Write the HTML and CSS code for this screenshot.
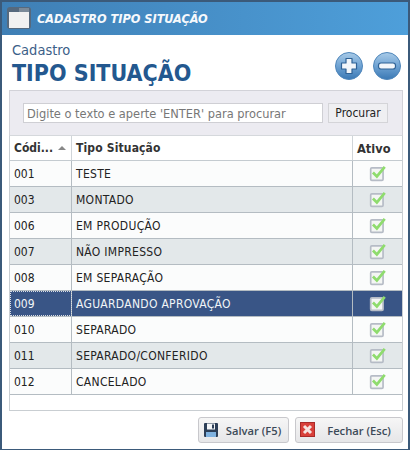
FILE: index.html
```html
<!DOCTYPE html>
<html lang="pt">
<head>
<meta charset="utf-8">
<title>Cadastro Tipo Situação</title>
<link rel="stylesheet" href="styles.css">
</head>
<body>
<div class="window">
  <header class="titlebar">
    <svg class="win-icon" width="24" height="24" viewBox="0 0 24 24">
      <rect x="0" y="0" width="24" height="22" rx="3" fill="#56697d"/>
      <rect x="2" y="5" width="20" height="16" fill="#f1f1f1"/>
      <rect x="12" y="1" width="10" height="4" fill="#7b8a99"/>
    </svg>
    <span class="title-text">CADASTRO TIPO SITUAÇÃO</span>
  </header>
  <main class="content">
    <div class="heading">
      <div>
        <div class="sub">Cadastro</div>
        <h1 class="main-title">TIPO SITUAÇÃO</h1>
      </div>
      <div class="round-btns">
        <svg class="round" width="28" height="28" viewBox="0 0 28 28">
          <defs>
            <linearGradient id="rg" x1="0" y1="0" x2="0" y2="1">
              <stop offset="0" stop-color="#a9cbe8"/>
              <stop offset="0.5" stop-color="#6fa3d3"/>
              <stop offset="1" stop-color="#3a78b4"/>
            </linearGradient>
          </defs>
          <circle cx="14" cy="14" r="13.5" fill="url(#rg)" stroke="#4f86ba"/>
          <path d="M11 6.500h6v4.500h4.500v6H17v4.500h-6V17H6.500v-6H11z" fill="#f2f6fa" stroke="#2f6296" stroke-width="1.200" stroke-linejoin="round"/>
        </svg>
        <svg class="round" width="28" height="28" viewBox="0 0 28 28">
          <circle cx="14" cy="14" r="13.500" fill="url(#rg)" stroke="#4f86ba"/>
          <rect x="5.500" y="11" width="17" height="6" rx="2.500" fill="#f2f6fa" stroke="#2f6296" stroke-width="1.200"/>
        </svg>
      </div>
    </div>

    <form class="search">
      <input class="search-input" type="text" placeholder="Digite o texto e aperte 'ENTER' para procurar">
      <button class="search-btn" type="button">Procurar</button>
    </form>

    <div class="grid">
      <div class="row head">
        <div class="c c1">Códi...<span class="sort"></span></div>
        <div class="c c2">Tipo Situação</div>
        <div class="c c3">Ativo</div>
      </div>
      <div class="row"><div class="c c1">001</div><div class="c c2">TESTE</div><div class="c c3"><svg class="chk" viewBox="0 0 16 16"><use href="#check"/></svg></div></div>
      <div class="row alt"><div class="c c1">003</div><div class="c c2">MONTADO</div><div class="c c3"><svg class="chk" viewBox="0 0 16 16"><use href="#check"/></svg></div></div>
      <div class="row"><div class="c c1">006</div><div class="c c2">EM PRODUÇÃO</div><div class="c c3"><svg class="chk" viewBox="0 0 16 16"><use href="#check"/></svg></div></div>
      <div class="row alt"><div class="c c1">007</div><div class="c c2">NÃO IMPRESSO</div><div class="c c3"><svg class="chk" viewBox="0 0 16 16"><use href="#check"/></svg></div></div>
      <div class="row"><div class="c c1">008</div><div class="c c2">EM SEPARAÇÃO</div><div class="c c3"><svg class="chk" viewBox="0 0 16 16"><use href="#check"/></svg></div></div>
      <div class="row sel"><div class="c c1">009</div><div class="c c2">AGUARDANDO APROVAÇÃO</div><div class="c c3"><svg class="chk" viewBox="0 0 16 16"><use href="#check"/></svg></div></div>
      <div class="row"><div class="c c1">010</div><div class="c c2">SEPARADO</div><div class="c c3"><svg class="chk" viewBox="0 0 16 16"><use href="#check"/></svg></div></div>
      <div class="row alt"><div class="c c1">011</div><div class="c c2">SEPARADO/CONFERIDO</div><div class="c c3"><svg class="chk" viewBox="0 0 16 16"><use href="#check"/></svg></div></div>
      <div class="row"><div class="c c1">012</div><div class="c c2">CANCELADO</div><div class="c c3"><svg class="chk" viewBox="0 0 16 16"><use href="#check"/></svg></div></div>
    </div>

    <footer class="actions">
      <button class="act act-save" type="button">
        <svg width="16" height="16" viewBox="0 0 16 16">
          <rect x="1" y="1" width="14" height="14" rx="1" fill="#2c3e57"/>
          <rect x="4" y="1.500" width="8" height="6" fill="#f4f6f8"/>
          <rect x="9" y="2.500" width="2" height="4" fill="#2c3e57"/>
          <rect x="3" y="10" width="10" height="5" fill="#7fb2e0"/>
        </svg>
        <span class="act-label">Salvar (F5)</span>
      </button>
      <button class="act act-close" type="button">
        <svg width="16" height="16" viewBox="0 0 16 16">
          <rect x="0.500" y="0.500" width="14" height="14" fill="#d9403a" stroke="#a92a28"/>
          <path d="M4 4l7 7M11 4l-7 7" stroke="#f5e3e0" stroke-width="3"/>
        </svg>
        <span class="act-label">Fechar (Esc)</span>
      </button>
    </footer>
  </main>
</div>
<svg class="defs" width="0" height="0">
  <defs>
    <g id="check">
      <rect x="1.500" y="3.500" width="11" height="11" rx="1" fill="#f4f6f4" stroke="#b6bcc6" stroke-width="1.500"/>
      <path d="M3.500 7.500l3.500 3.500L14 2.500" fill="none" stroke="#8fdc6e" stroke-width="2.400"/>
    </g>
  </defs>
</svg>
</body>
</html>
```
FILE: styles.css
```css
* { box-sizing: border-box; }
html, body { margin: 0; padding: 0; }
body {
  width: 410px;
  height: 450px;
  overflow: hidden;
  font-family: "DejaVu Sans", sans-serif;
  font-stretch: condensed;
  font-size: 12px;
  color: #222;
  background: #3b5a7a;
  padding: 2px 2px 1px 2px;
}
.defs { display: block; height: 0; }
.window {
  width: 406px;
  height: 447px;
  display: flex;
  flex-direction: column;
  background: #fff;
}
.titlebar {
  height: 33px;
  flex: none;
  display: flex;
  align-items: center;
  gap: 6px;
  padding-left: 5px;
  background: linear-gradient(to right, #3f7fb5, #4e9fda);
}
.win-icon { flex: none; }
.title-text {
  color: #f6f9fc;
  font-size: 12.6px;
  font-weight: bold;
  font-style: italic;
}
.content {
  flex: 1;
  display: flex;
  flex-direction: column;
  padding: 0 5px 0 7px;
  background: #fff;
}
.heading {
  height: 55px;
  flex: none;
  display: flex;
  justify-content: space-between;
  padding: 6px 0 0 3px;
}
.sub { font-size: 14.5px; line-height: 18px; color: #3c6088; }
.main-title {
  margin: 0;
  font-size: 23px;
  line-height: 28px;
  font-weight: bold;
  color: #23588f;
}
.round-btns {
  display: flex;
  gap: 10px;
  padding: 11px 2px 0 0;
}
.round { display: block; }
.search {
  height: 45px;
  flex: none;
  display: flex;
  align-items: center;
  gap: 5px;
  padding: 0 4px 0 13px;
  background: #ecebf1;
  border: 1px solid #d2d2d8;
  border-bottom: 0;
}
.search-input {
  width: 300px;
  height: 20px;
  padding: 0 3px;
  font: inherit;
  font-size: 12.7px;
  font-stretch: condensed;
  border: 1px solid #cfcfd4;
  background: #fff;
}
.search-input::placeholder { color: #777; opacity: 1; }
.search-btn {
  width: 60px;
  height: 20px;
  padding: 0;
  font: inherit;
  font-stretch: condensed;
  color: #222;
  background: #efeff2;
  border: 1px solid #d4d4d8;
}
.grid {
  height: 276px;
  flex: none;
  background: #fff;
  border: 1px solid #c9ced2;
  border-top: 1px solid #d5d8dc;
}
.row {
  display: grid;
  grid-template-columns: 62px 1fr 49px;
  height: 26px;
  background: #fbfcfc;
  border-bottom: 1px solid #b4bcc2;
}
.row.alt { background: #e3e8ea; }
.row.head { height: 25px; background: #fff; border-bottom: 1px solid #c4cbd0; font-weight: bold; color: #333; }
.head .c2 { letter-spacing: 0.15px; }
.head .c3 { font-size: 12.7px; justify-content: flex-start; padding-left: 4px; }
.row.sel { background: #395586; color: #f2f5f8; }
.row.sel .c1 { outline: 1px dotted #d9dde4; outline-offset: -1px; }
.c {
  display: flex;
  align-items: center;
  padding-left: 4px;
  white-space: nowrap;
  overflow: hidden;
  border-right: 1px solid #b4bcc2;
}
.c2 { letter-spacing: 0.3px; }
.head .c { border-right-color: #d0d5d9; }
.c3 { justify-content: center; padding-left: 0; border-right: 0; }
.sort {
  margin-left: 5px;
  width: 0;
  height: 0;
  border-left: 4px solid transparent;
  border-right: 4px solid transparent;
  border-bottom: 4px solid #888;
}
.chk { width: 18px; height: 18px; margin-top: -2px; }
.actions {
  flex: 1;
  display: flex;
  justify-content: flex-end;
  align-items: flex-start;
  gap: 6px;
  padding-top: 6px;
}
.act {
  height: 26px;
  display: flex;
  align-items: center;
  padding: 0 0 0 4px;
  font-family: "Open Sans", sans-serif;
  font-size: 11.2px;
  font-stretch: normal;
  font-weight: 600;
  color: #3c4a58;
  background: linear-gradient(to bottom, #f6f6f6, #e6e6e8);
  border: 1px solid #c8c8cc;
  border-radius: 3px;
}
.act-save { width: 91px; }
.act-close { width: 108px; }
.act-label { flex: 1; text-align: center; }
```
